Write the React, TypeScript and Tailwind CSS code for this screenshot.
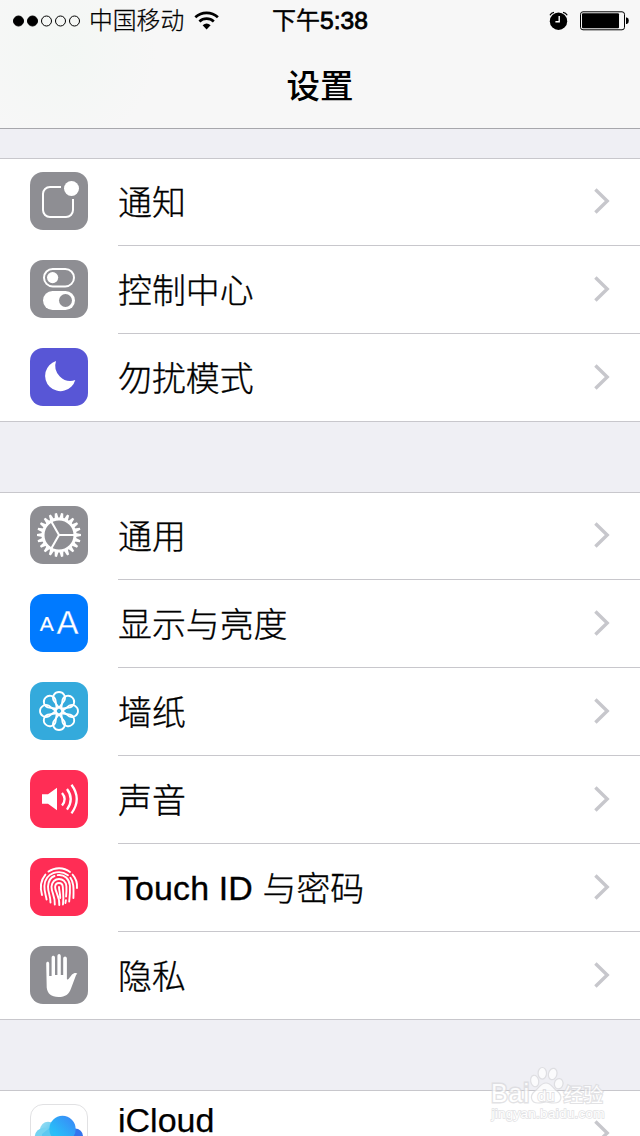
import type { ReactNode } from 'react';

const angles8 = [0, 45, 90, 135, 180, 225, 270, 315];
const teeth = Array.from({ length: 22 }, (_, i) => 90 + (i * 360) / 22);

function NotificationsIcon() {
  return (
    <g fill="none" stroke="#fff" strokeWidth="2">
      <path d="M31 15H20A7 7 0 0 0 13 22V38A7 7 0 0 0 20 45H36A7 7 0 0 0 43 38V27" />
      <circle cx="41.5" cy="16.5" r="7.5" fill="#fff" stroke="none" />
    </g>
  );
}

function ControlIcon() {
  return (
    <g>
      <rect x="14" y="9" width="30" height="17.4" rx="8.7" fill="none" stroke="#fff" strokeWidth="2" />
      <circle cx="22.6" cy="17.6" r="5.6" fill="#fff" />
      <rect x="13" y="31" width="32" height="19" rx="9.5" fill="#fff" />
      <circle cx="35.5" cy="40.5" r="6.5" fill="#8e8e93" />
    </g>
  );
}

function MoonIcon() {
  return <path d="M26 13A15.4 15.4 0 1 0 45.3 32A15.2 15.2 0 0 1 26 13Z" fill="#fff" />;
}

function GearIcon() {
  return (
    <g stroke="#fff" fill="none">
      <circle cx="29" cy="29" r="16" strokeWidth="3" />
      {teeth.map((a) => (
        <path key={a} d="M27 12.3L27.9 7H30.1L31 12.3Z" fill="#fff" stroke="none" transform={`rotate(${a} 29 29)`} />
      ))}
      <path d="M45 29H29L21 15.1M29 29L21 42.9" strokeWidth="2.1" />
    </g>
  );
}

function DisplayIcon() {
  return (
    <g fill="#fff" className="font-['Liberation_Sans',sans-serif]">
      <text x="9.8" y="36.7" fontSize="21" stroke="#fff" strokeWidth="0.15">A</text>
      <text x="26.4" y="40" fontSize="33" stroke="#007aff" strokeWidth="0.3">A</text>
    </g>
  );
}

function WallpaperIcon() {
  return (
    <g fill="none" stroke="#fff" strokeWidth="1.8">
      <circle cx="29" cy="29" r="3.3" />
      {angles8.map((a) => (
        <path key={a} d="M29 25.8L23.6 18.6A6 6 0 1 1 34.4 18.6Z" transform={`rotate(${a} 29 29)`} />
      ))}
    </g>
  );
}

function SoundIcon() {
  return (
    <g fill="none" stroke="#fff" strokeWidth="2.3">
      <path d="M12 24.3H18L27 17.7V40.3L18 33.7H12Z" fill="#fff" stroke="none" />
      <path d="M32 23Q37.3 29 32 35.5M37 19Q44.5 29 37 39.6M41.5 14.8Q52 29 41.5 43.4" />
    </g>
  );
}

function TouchIcon() {
  return (
    <g fill="none" stroke="#fff" strokeWidth="1.9" strokeLinecap="round">
      <path d="M18.5 13.6A18 18 0 0 1 40 14M42.6 16.6A18 18 0 0 1 47 30M15.4 16.6C10.5 22.5 9.8 29.5 12 37" />
      <path d="M16.6 41.5C15.5 35.5 14.2 33 14.4 28C15.1 14.5 29.5 11 38 17.2M40.4 19.8C43.5 24 43.8 29 43.4 40" />
      <path d="M20.5 44.5C20.5 37 17.9 34.5 18 28.5C18.4 22.5 21.2 19.1 24.5 18M27.7 17.1C34.5 16.3 39.3 21 39.9 27.5C40.2 34 39.9 38 39.2 43.5" />
      <path d="M24.8 46.5C25.3 38 21.4 34.5 21.5 28.8C22 18.5 35.8 18.3 36.4 28.5C36.6 32 36.5 34.5 36.1 38.5" />
      <path d="M29.3 47C29.8 38 25 34 25.1 29C25.5 23.6 32.5 23.6 32.8 29C33.2 35 33.9 39.5 33 46.5" />
      <path d="M29 29C29.1 33 30.3 35 30.2 40M35.9 42.3L35.4 45" />
    </g>
  );
}

function HandIcon() {
  return (
    <path
      fill="#fff"
      d="M16.2 17.7C16.2 15.2 19.2 15.2 19.2 17.7V30H21.6V11.5C21.6 9 25 9 25 11.5V29H27.4V10C27.4 7.3 30.8 7.3 30.8 10V29H33.2V12.5C33.2 9.8 36.9 9.8 36.9 12.5V33.2C37.3 33.8 38 33.7 38.5 33.1L42 28.6C43.5 27 46 26.5 47.3 27.6C47.4 28 46.3 28.6 45.8 29.7L41 42.4C39 48 35.5 51 28.5 51C21 51 17.5 47.5 16.7 41.5Z"
    />
  );
}

function CloudIcon() {
  return (
    <g>
      <defs>
        <linearGradient id="cloud-main" x1="0" y1="1" x2="1" y2="0">
          <stop offset="0.25" stopColor="#28c0f8" />
          <stop offset="1" stopColor="#3b83f7" />
        </linearGradient>
        <linearGradient id="cloud-left" x1="0" y1="0" x2="1" y2="1">
          <stop offset="0" stopColor="#9be0f4" />
          <stop offset="1" stopColor="#45bcec" />
        </linearGradient>
      </defs>
      <rect x="0.5" y="0.5" width="57" height="57" rx="12.5" fill="#fff" stroke="#e1e1e3" />
      <circle cx="45" cy="32.5" r="8" fill="#3474ed" />
      <circle cx="18" cy="25.5" r="7.8" fill="url(#cloud-left)" />
      <circle cx="14" cy="33" r="9.3" fill="#75d3f1" />
      <circle cx="32.5" cy="25" r="13.2" fill="url(#cloud-main)" />
      <path d="M19.5 24A8 8 0 0 1 23.5 32V40H12V30Z" fill="#39b8ef" opacity="0.4" />
    </g>
  );
}

type Item = { label: ReactNode; id: string; color: string; icon: ReactNode };

const first: Item[] = [
  { id: 'notifications', label: '通知', color: 'bg-[#8e8e93]', icon: <NotificationsIcon /> },
  { id: 'control', label: '控制中心', color: 'bg-[#8e8e93]', icon: <ControlIcon /> },
  { id: 'dnd', label: '勿扰模式', color: 'bg-[#5856d6]', icon: <MoonIcon /> },
];

const second: Item[] = [
  { id: 'general', label: '通用', color: 'bg-[#8e8e93]', icon: <GearIcon /> },
  { id: 'display', label: '显示与亮度', color: 'bg-[#007aff]', icon: <DisplayIcon /> },
  { id: 'wallpaper', label: '墙纸', color: 'bg-[#34aadc]', icon: <WallpaperIcon /> },
  { id: 'sound', label: '声音', color: 'bg-[#ff2d55]', icon: <SoundIcon /> },
  {
    id: 'touch',
    label: (
      <>
        <span className="relative -top-px tracking-[0.15px]">Touch ID </span>与密码
      </>
    ),
    color: 'bg-[#ff2d55]',
    icon: <TouchIcon />,
  },
  { id: 'privacy', label: '隐私', color: 'bg-[#8e8e93]', icon: <HandIcon /> },
];

function Row({ item, isFirst, isLast }: { item: Item; isFirst: boolean; isLast: boolean }) {
  return (
    <li className={`flex pl-[30px] ${isFirst ? 'h-[87px] pt-[13px]' : 'h-[88px] pt-[14px]'} ${isLast ? 'border-b border-[#c8c7cc]' : ''}`}>
      <svg viewBox="0 0 58 58" className={`size-[58px] shrink-0 rounded-[13px] ${item.color}`}>
        {item.icon}
      </svg>
      <div className={`-mt-[14px] ml-[30px] flex flex-1 justify-between pt-[14px] pr-[30px] ${isLast ? '' : 'border-b border-[#c8c7cc]'}`}>
        <span className="h-[58px] text-[33.9px] leading-[62px] whitespace-nowrap [-webkit-text-stroke:0.35px_black]">{item.label}</span>
        <Chevron />
      </div>
    </li>
  );
}

function Chevron() {
  return (
    <svg viewBox="0 0 17 58" className="h-[58px] w-[17px] shrink-0" fill="none" stroke="#c7c7cc" strokeWidth="3.4">
      <path d="M2.4 17.5L14.2 29L2.4 40.5" />
    </svg>
  );
}

function Section({ items }: { items: Item[] }) {
  return (
    <ul className="shrink-0 border-t border-[#c8c7cc] bg-white">
      {items.map((item, i) => (
        <Row key={item.id} item={item} isFirst={i === 0} isLast={i === items.length - 1} />
      ))}
    </ul>
  );
}

function StatusBar() {
  return (
    <div className="flex h-[41px] items-center pl-[13px]">
      <svg className="h-[12px] w-[68px]" viewBox="0 0 68 12" stroke="#000">
        <circle cx="5.5" cy="6" r="5" fill="#000" />
        <circle cx="19.5" cy="6" r="5" fill="#000" />
        <circle cx="33.5" cy="6" r="5" fill="none" />
        <circle cx="47.5" cy="6" r="5" fill="none" />
        <circle cx="61.5" cy="6" r="5" fill="none" />
      </svg>
      <span className="ml-[8px] w-[96px] text-[23.8px] leading-[41px] whitespace-nowrap [-webkit-text-stroke:0.25px_black]">中国移动</span>
      <svg className="ml-[9px] h-[20px] w-[26px]" viewBox="0 0 26 20" fill="none" stroke="#000" strokeWidth="2.7">
        <path d="M1.3 6.2A16.8 16.8 0 0 1 23.9 6.2M5.4 10.5A10.6 10.6 0 0 1 19.8 10.5" />
        <path d="M8.6 14.2A6.3 6.3 0 0 1 16.6 14.2L12.6 18.6Z" fill="#000" stroke="none" />
      </svg>
      <span className="ml-[52px] w-[100px] text-[24px] leading-[41px] font-normal whitespace-nowrap [-webkit-text-stroke:0.4px_black]">
        下午<span className="text-[24.6px] [-webkit-text-stroke:0.8px_black]">5:38</span>
      </span>
      <svg className="ml-[177px] h-[20px] w-[20px]" viewBox="0 0 20 20">
        <circle cx="9.5" cy="10.2" r="8.7" />
        <path d="M1 4.2Q2.2 1.7 5 1.4M14 1.4Q16.8 1.7 18.2 4.2" stroke="#000" strokeWidth="1.3" fill="none" />
        <path d="M10.2 5V10.8H6.4" stroke="#fff" strokeWidth="1.4" fill="none" />
      </svg>
      <svg className="ml-[11px] h-[20px] w-[50px]" viewBox="0 0 50 20">
        <rect x="0.5" y="0.8" width="44" height="18" rx="2.5" fill="none" stroke="#000" />
        <rect x="2" y="2.3" width="37" height="15" rx="1" />
        <path d="M46 6.6H46.8Q48.8 6.9 48.8 9.8T46.8 13H46Z" />
      </svg>
    </div>
  );
}

function Watermark() {
  return (
    <svg className="absolute top-[1060px] left-[484px] h-[70px] w-[130px]" viewBox="0 0 130 70" fill="#fff" stroke="#d9d9dc" strokeWidth="1.2" opacity="0.75">
      <ellipse cx="50.7" cy="21" rx="4" ry="5.8" transform="rotate(-12 50.7 21)" />
      <ellipse cx="58.3" cy="13.3" rx="4.2" ry="5.8" />
      <ellipse cx="68.7" cy="14" rx="4.2" ry="5.8" transform="rotate(15 68.7 14)" />
      <ellipse cx="74.7" cy="23.7" rx="4.3" ry="5.2" transform="rotate(12 74.7 23.7)" />
      <path d="M62 23C57 23 55.5 27 51 31C45 36 47 43 54 43C58 43 60 42 62 42C64 42 66 43 70 43C78 43 79 36 73 31C68 27 67 23 62 23Z" />
      <g className="font-['Liberation_Sans','Noto_Sans_CJK_SC',sans-serif] [paint-order:stroke]" fontWeight="400">
        <text x="7" y="42" fontSize="25" strokeWidth="2.8" textLength="38">Bai</text>
        <text x="53.5" y="41" fontSize="15.5" strokeWidth="1.8">du</text>
        <text x="79.5" y="41.5" fontSize="19.8" strokeWidth="2.2">经验</text>
        <text x="7.5" y="58" fontSize="13.5" strokeWidth="1.5" textLength="113">jingyan.baidu.com</text>
      </g>
    </svg>
  );
}

export default function App() {
  return (
    <div className="relative flex h-[1136px] w-[640px] flex-col overflow-hidden bg-[#efeff4] font-['Liberation_Sans','Noto_Sans_CJK_SC',sans-serif] font-light text-black">
      <header className="h-[129px] shrink-0 border-b border-[#a7a7ac] bg-[#f7f7f7] bg-[radial-gradient(circle_at_62px_52px,#f3f7f4_0px,#f7f7f7_95px)]">
        <StatusBar />
        <h1 className="text-center text-[33.5px] leading-[91px] font-medium">设置</h1>
      </header>
      <main className="flex flex-col gap-[70px] pt-[29px]">
        <Section items={first} />
        <Section items={second} />
        <section className="flex h-[88px] shrink-0 border-t border-[#c8c7cc] bg-white pt-[13px] pr-[30px] pl-[30px]">
          <svg viewBox="0 0 58 58" className="size-[58px] shrink-0"><CloudIcon /></svg>
          <span className="ml-[30px] flex-1 text-[34px] leading-[32px] [-webkit-text-stroke:0.25px_black]">iCloud</span>
          <Chevron />
        </section>
      </main>
      <Watermark />
    </div>
  );
}
